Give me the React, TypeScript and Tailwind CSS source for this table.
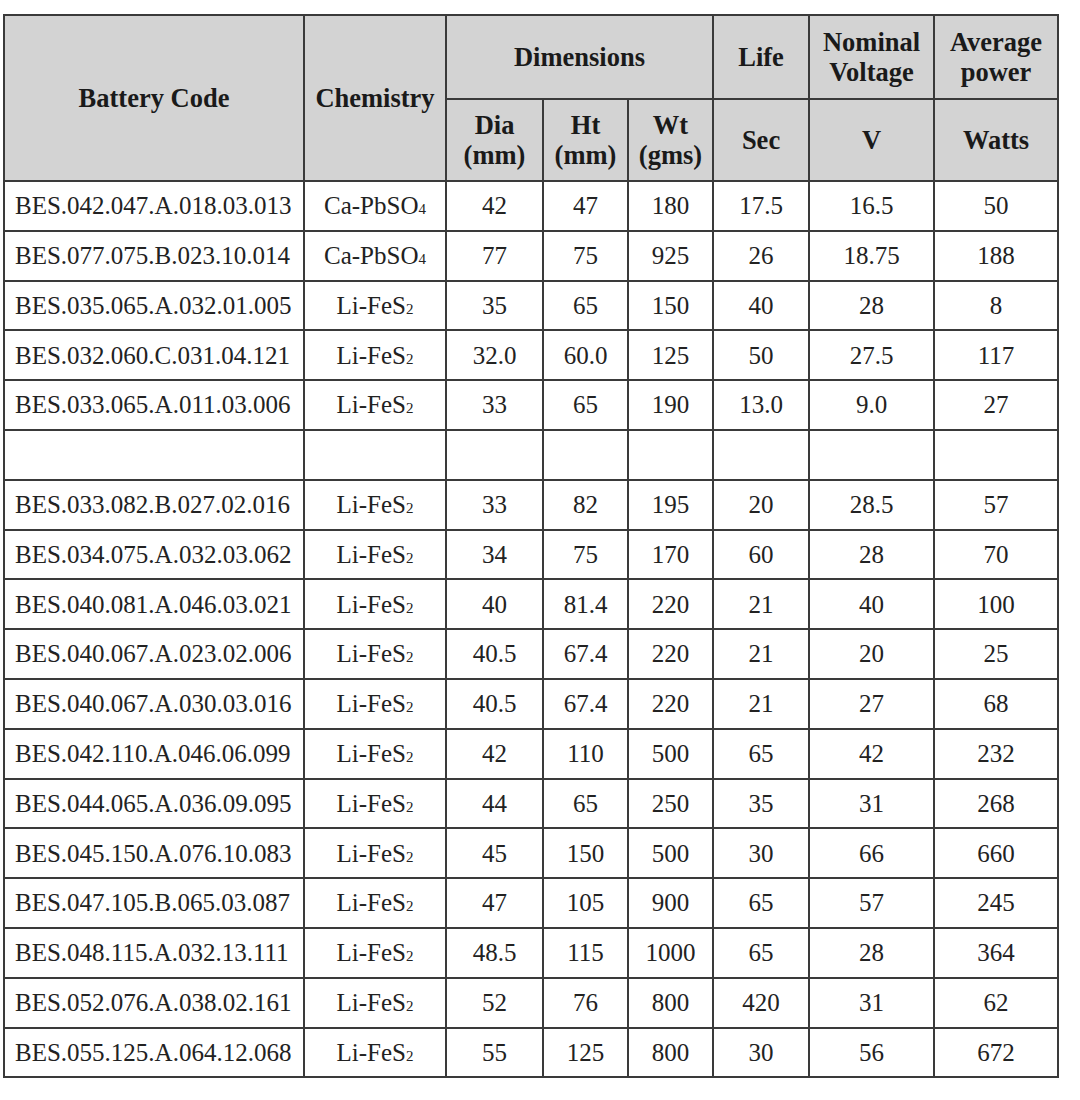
type Row = {
  code: string
  chem: "ca" | "li"
  dia: string
  ht: string
  wt: string
  life: string
  volt: string
  power: string
}

const rows: (Row | null)[] = [
  { code: "BES.042.047.A.018.03.013", chem: "ca", dia: "42", ht: "47", wt: "180", life: "17.5", volt: "16.5", power: "50" },
  { code: "BES.077.075.B.023.10.014", chem: "ca", dia: "77", ht: "75", wt: "925", life: "26", volt: "18.75", power: "188" },
  { code: "BES.035.065.A.032.01.005", chem: "li", dia: "35", ht: "65", wt: "150", life: "40", volt: "28", power: "8" },
  { code: "BES.032.060.C.031.04.121", chem: "li", dia: "32.0", ht: "60.0", wt: "125", life: "50", volt: "27.5", power: "117" },
  { code: "BES.033.065.A.011.03.006", chem: "li", dia: "33", ht: "65", wt: "190", life: "13.0", volt: "9.0", power: "27" },
  null,
  { code: "BES.033.082.B.027.02.016", chem: "li", dia: "33", ht: "82", wt: "195", life: "20", volt: "28.5", power: "57" },
  { code: "BES.034.075.A.032.03.062", chem: "li", dia: "34", ht: "75", wt: "170", life: "60", volt: "28", power: "70" },
  { code: "BES.040.081.A.046.03.021", chem: "li", dia: "40", ht: "81.4", wt: "220", life: "21", volt: "40", power: "100" },
  { code: "BES.040.067.A.023.02.006", chem: "li", dia: "40.5", ht: "67.4", wt: "220", life: "21", volt: "20", power: "25" },
  { code: "BES.040.067.A.030.03.016", chem: "li", dia: "40.5", ht: "67.4", wt: "220", life: "21", volt: "27", power: "68" },
  { code: "BES.042.110.A.046.06.099", chem: "li", dia: "42", ht: "110", wt: "500", life: "65", volt: "42", power: "232" },
  { code: "BES.044.065.A.036.09.095", chem: "li", dia: "44", ht: "65", wt: "250", life: "35", volt: "31", power: "268" },
  { code: "BES.045.150.A.076.10.083", chem: "li", dia: "45", ht: "150", wt: "500", life: "30", volt: "66", power: "660" },
  { code: "BES.047.105.B.065.03.087", chem: "li", dia: "47", ht: "105", wt: "900", life: "65", volt: "57", power: "245" },
  { code: "BES.048.115.A.032.13.111", chem: "li", dia: "48.5", ht: "115", wt: "1000", life: "65", volt: "28", power: "364" },
  { code: "BES.052.076.A.038.02.161", chem: "li", dia: "52", ht: "76", wt: "800", life: "420", volt: "31", power: "62" },
  { code: "BES.055.125.A.064.12.068", chem: "li", dia: "55", ht: "125", wt: "800", life: "30", volt: "56", power: "672" },
]

function Chem({ kind }: { kind: "ca" | "li" }) {
  if (kind === "ca") {
    return (
      <>
        Ca-PbSO<span className="text-[15px]">4</span>
      </>
    )
  }
  return (
    <>
      Li-FeS<span className="text-[15px]">2</span>
    </>
  )
}

const th = "border-2 border-[#3a3a3a] bg-[#d3d3d3] font-bold text-center align-middle leading-[30px] px-1"
const td = "border-2 border-[#3a3a3a] text-center align-middle px-1"

export default function App() {
  return (
    <div className="bg-white w-[1080px] h-[1100px] pt-[14px] pl-[3px] font-[family-name:Liberation_Serif,serif] text-[#222]">
      <table className="border-collapse table-fixed w-[1054px]">
        <colgroup>
          <col className="w-[300px]" />
          <col className="w-[142px]" />
          <col className="w-[97px]" />
          <col className="w-[85px]" />
          <col className="w-[85px]" />
          <col className="w-[96px]" />
          <col className="w-[125px]" />
          <col className="w-[124px]" />
        </colgroup>
        <thead className="text-[26.5px] text-[#1a1a1a]">
          <tr className="h-[84px]">
            <th rowSpan={2} className={th}>Battery Code</th>
            <th rowSpan={2} className={th}>Chemistry</th>
            <th colSpan={3} className={th}>Dimensions</th>
            <th className={th}>Life</th>
            <th className={th}>
              Nominal
              <br />
              Voltage
            </th>
            <th className={th}>
              Average
              <br />
              power
            </th>
          </tr>
          <tr className="h-[82px]">
            <th className={th}>
              Dia
              <br />
              (mm)
            </th>
            <th className={th}>
              Ht
              <br />
              (mm)
            </th>
            <th className={th}>
              Wt
              <br />
              (gms)
            </th>
            <th className={th}>Sec</th>
            <th className={th}>V</th>
            <th className={th}>Watts</th>
          </tr>
        </thead>
        <tbody className="text-[25px]">
          {rows.map((r, i) =>
            r ? (
              <tr key={i} className="h-[49.8px]">
                <td className="border-2 border-[#3a3a3a] text-left align-middle pl-[10px] pr-1">{r.code}</td>
                <td className={td}>
                  <Chem kind={r.chem} />
                </td>
                <td className={td}>{r.dia}</td>
                <td className={td}>{r.ht}</td>
                <td className={td}>{r.wt}</td>
                <td className={td}>{r.life}</td>
                <td className={td}>{r.volt}</td>
                <td className={td}>{r.power}</td>
              </tr>
            ) : (
              <tr key={i} className="h-[49.8px]">
                {Array.from({ length: 8 }).map((_, j) => (
                  <td key={j} className={td}></td>
                ))}
              </tr>
            )
          )}
        </tbody>
      </table>
    </div>
  )
}
